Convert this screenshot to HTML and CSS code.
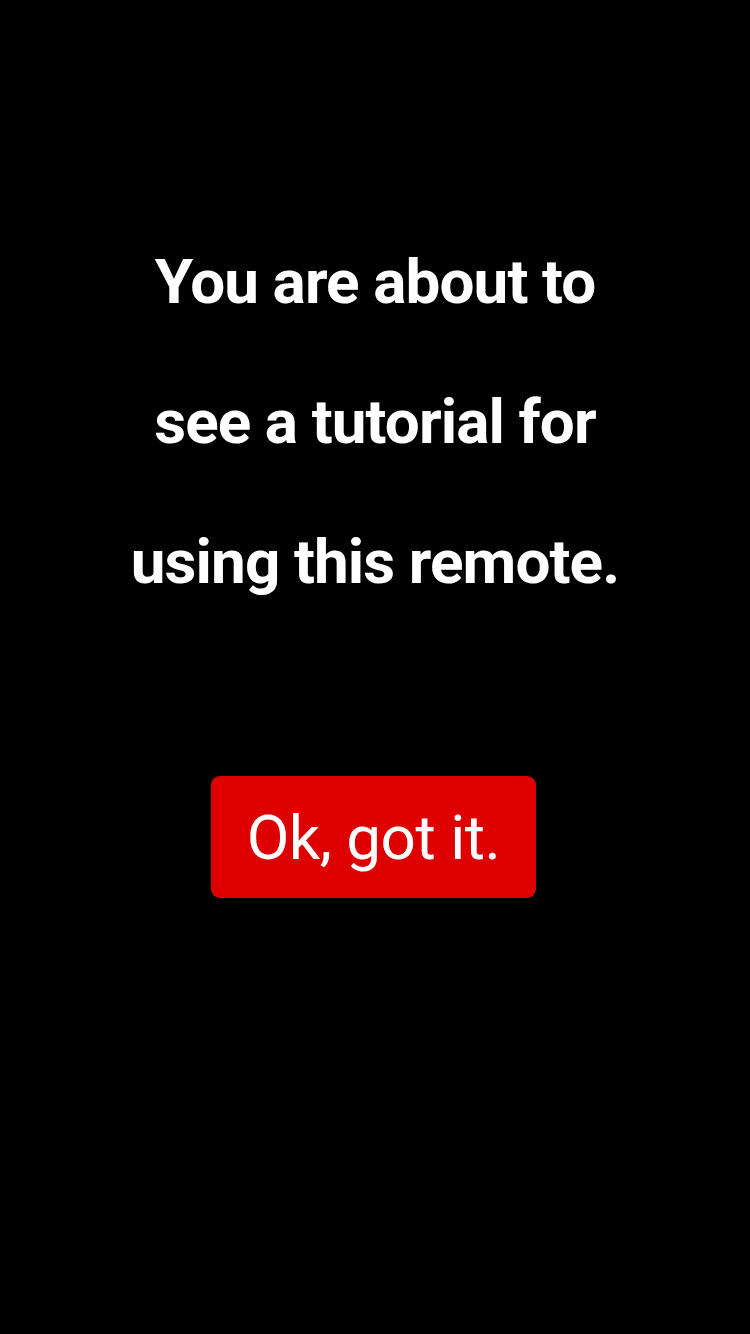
FILE: index.html
```html
<!DOCTYPE html>
<html>
<head>
<meta charset="utf-8">
<link rel="stylesheet" href="styles.css">
</head>
<body>
<main class="screen">
  <h1 class="message">You are about to<br>see a tutorial for<br>using this remote.</h1>
  <button class="ok-btn">Ok, got it.</button>
</main>
</body>
</html>
```
FILE: styles.css
```css
html, body {
  margin: 0;
  padding: 0;
  background: #000;
}
.screen {
  width: 750px;
  height: 1334px;
  display: flex;
  flex-direction: column;
  align-items: center;
  padding-top: 212px;
  box-sizing: border-box;
  font-family: Roboto, "Liberation Sans", sans-serif;
}
.message {
  margin: 0;
  color: #fff;
  font-weight: 700;
  font-size: 62px;
  line-height: 140px;
  letter-spacing: -0.9px;
  text-align: center;
}
.ok-btn {
  margin-top: 144px;
  margin-right: 3px;
  width: 325px;
  height: 122px;
  border: none;
  border-radius: 9px;
  background: #de0000;
  color: #fff;
  font-family: Roboto, "Liberation Sans", sans-serif;
  font-size: 62px;
  font-weight: 400;
  letter-spacing: -0.5px;
  padding: 0;
}
```
